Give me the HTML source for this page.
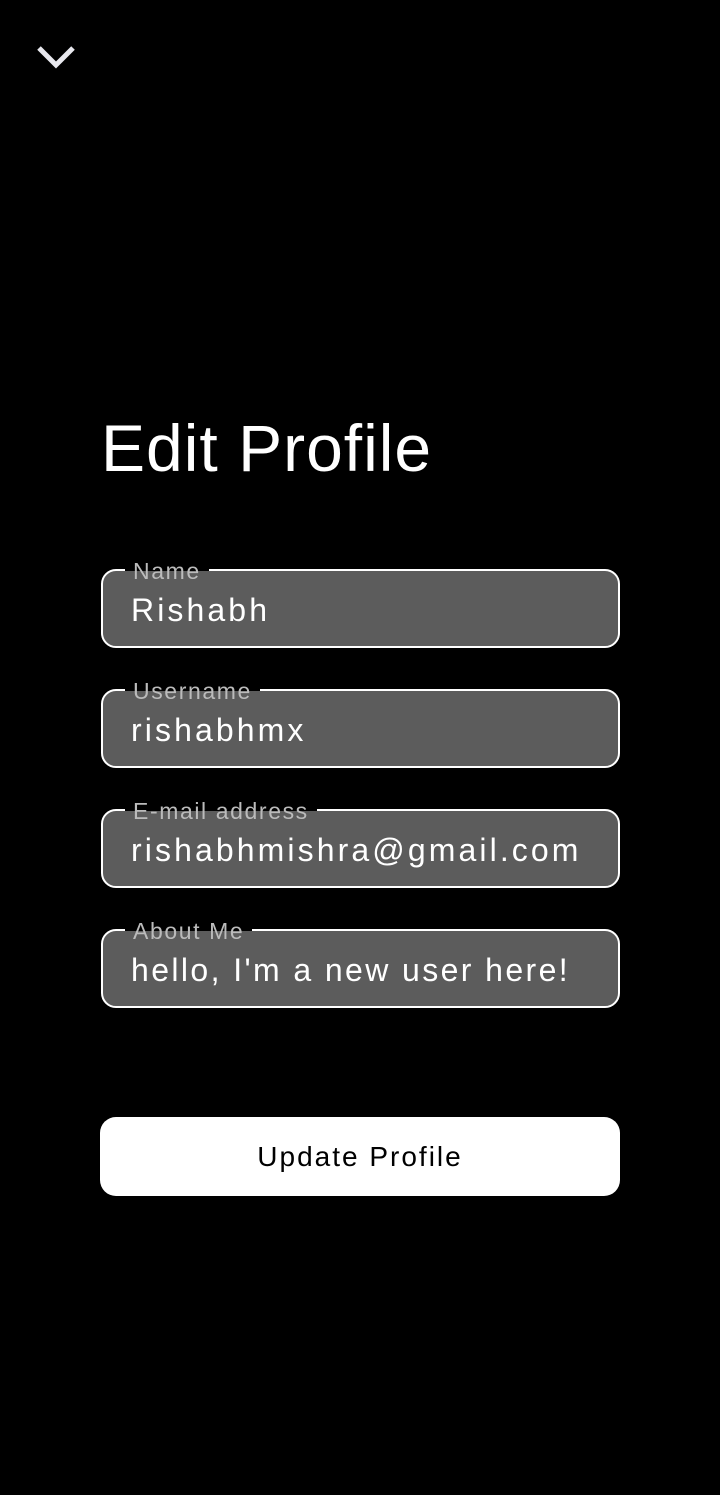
<!DOCTYPE html>
<html><head><style>
body{margin:0;width:720px;height:1495px;background:#000;font-family:"Liberation Sans",sans-serif;position:relative;overflow:hidden}
.chev{position:absolute;left:36px;top:44px}
h1{position:absolute;left:101px;top:410px;margin:0;color:#fff;font-weight:400;font-size:66px;letter-spacing:1px}
.f{position:absolute;left:101px;width:515px;height:75px;border:2px solid #fff;border-radius:15px;background:#5c5c5c}
.f .l{position:absolute;left:22px;top:-14px;padding:0 8px;font-size:23px;color:#bbb;letter-spacing:1.6px;background:linear-gradient(#000 0,#000 50%,#5c5c5c 50%);line-height:28px}
.f .v{position:absolute;left:28px;top:21px;font-size:32px;color:#fff;letter-spacing:3.1px;white-space:nowrap}
.btn{position:absolute;left:100px;top:1117px;width:520px;height:79px;background:#fff;border-radius:16px;text-align:center;line-height:79px;font-size:28px;color:#000;letter-spacing:2px}
</style></head><body>
<svg class="chev" width="40" height="28" viewBox="0 0 40 28"><path d="M3 4 L20 21 L37 4" stroke="#e8e8ee" stroke-width="5" fill="none"/></svg>
<h1>Edit Profile</h1>
<div class="f" style="top:569px"><span class="l">Name</span><span class="v">Rishabh</span></div>
<div class="f" style="top:689px"><span class="l">Username</span><span class="v">rishabhmx</span></div>
<div class="f" style="top:809px"><span class="l">E-mail address</span><span class="v">rishabhmishra@gmail.com</span></div>
<div class="f" style="top:929px"><span class="l">About Me</span><span class="v" style="letter-spacing:2.4px">hello, I'm a new user here!</span></div>
<div class="btn">Update Profile</div>
</body></html>
